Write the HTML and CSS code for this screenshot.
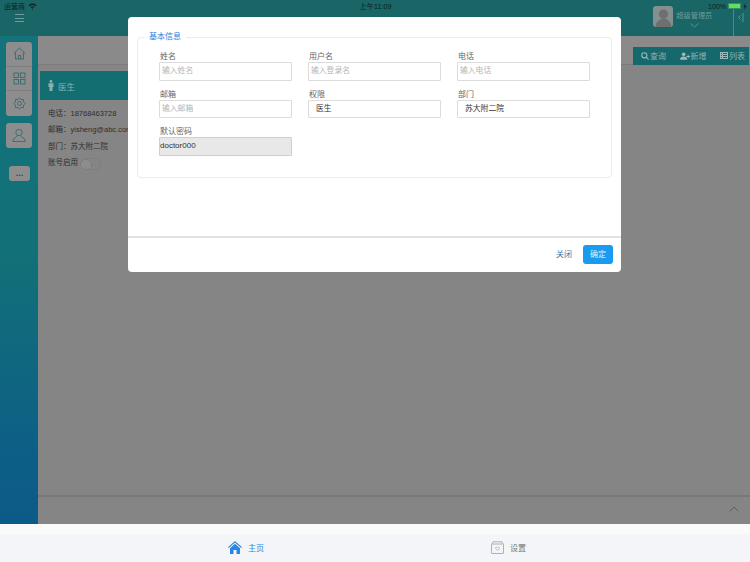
FILE: index.html
```html
<!DOCTYPE html>
<html lang="zh">
<head>
<meta charset="utf-8">
<title>医生</title>
<link rel="stylesheet" href="styles.css">
</head>
<body>
<div class="app">
  <div class="status">
    <div class="status-left"><span>运营商</span>
      <svg width="9" height="7" viewBox="0 0 9 7"><path d="M0.5 2.3C3 0 6 0 8.5 2.3L7.5 3.3C5.5 1.6 3.5 1.6 1.5 3.3ZM2.4 4.1C3.6 3 5.4 3 6.6 4.1L5.6 5C5 4.4 4 4.4 3.4 5ZM4.5 7L3.9 5.8C4.2 5.5 4.8 5.5 5.1 5.8Z" fill="#122"/></svg>
    </div>
    <div class="status-mid">上午11:09</div>
    <div class="status-right"><span>100%</span><i class="batt"><b></b></i><svg width="4" height="7" viewBox="0 0 4 7"><path d="M2.4 0L0.4 4H1.8L1.4 7L3.6 3H2.2Z" fill="#122"/></svg></div>
  </div>
  <header class="top">
    <div class="burger"><i></i><i></i><i></i></div>
    <div class="avatar"><svg width="21" height="21" viewBox="0 0 21 21"><circle cx="10.5" cy="8" r="4.6" fill="#6f6f6f"/><path d="M2.5 21C3 15 7 14 8.5 12.5H12.5C14 14 18 15 18.5 21Z" fill="#6f6f6f"/></svg></div>
    <div class="user-name">超级管理员
      <svg class="user-chev" width="9" height="5" viewBox="0 0 9 5"><path d="M0.5 0.5L4.5 4L8.5 0.5" fill="none" stroke="#6f9c9c" stroke-width="0.8"/></svg>
    </div>
    <div class="collapse"><svg width="6" height="9" viewBox="0 0 6 9" fill="none" stroke="#7fa9a9" stroke-width="0.7"><path d="M2.5 2.5L0.5 4.5L2.5 6.5M5 0V9"/></svg></div>
  </header>
  <div class="body">
    <aside class="side">
      <div class="side-group">
        <div class="side-btn"><svg width="13" height="13" viewBox="0 0 13 13" fill="none" stroke="#2c666a" stroke-width="0.8"><path d="M0.8 6.5L6.5 1L12.2 6.5M2.5 5.5V12H10.5V5.5M5.3 12V8.5H7.7V12"/></svg></div>
        <div class="side-btn"><svg width="13" height="13" viewBox="0 0 13 13" fill="none" stroke="#2c666a" stroke-width="0.8"><rect x="1" y="1" width="4.5" height="4.5"/><rect x="7.5" y="1" width="4.5" height="4.5"/><rect x="1" y="7.5" width="4.5" height="4.5"/><rect x="7.5" y="7.5" width="4.5" height="4.5"/></svg></div>
        <div class="side-btn"><svg width="13" height="13" viewBox="0 0 13 13" fill="none" stroke="#2c666a" stroke-width="0.8"><path d="M6.5 0.8L8 2.5L10.5 2.5L10.5 4.8L12.2 6.5L10.5 8.2L10.5 10.5L8 10.5L6.5 12.2L5 10.5L2.5 10.5L2.5 8.2L0.8 6.5L2.5 4.8L2.5 2.5L5 2.5Z"/><circle cx="6.5" cy="6.5" r="2"/></svg></div>
      </div>
      <div class="side-group side-user">
        <div class="side-btn"><svg width="14" height="15" viewBox="0 0 14 15" fill="none" stroke="#2c666a" stroke-width="0.8"><circle cx="7" cy="4.5" r="3.2"/><path d="M5.2 7.5C5.2 9.5 1 10 1 12V13.5H13V12C13 10 8.8 9.5 8.8 7.5"/></svg></div>
      </div>
      <div class="side-more">...</div>
    </aside>
    <main class="content">
      <div class="band">
        <div class="tools">
          <span class="tool"><svg width="8" height="8" viewBox="0 0 8 8" fill="none" stroke="#9fb9bb" stroke-width="1.1"><circle cx="3.3" cy="3.3" r="2.6"/><path d="M5.2 5.2L7.6 7.6"/></svg>查询</span>
          <span class="tool"><svg width="10" height="8" viewBox="0 0 11 8" fill="#9fb9bb"><circle cx="4" cy="2.2" r="2"/><path d="M0 8C0 5.5 2 4.6 4 4.6S8 5.5 8 8ZM8.5 2.5H9.5V4H11V5H9.5V6.5H8.5V5H7V4H8.5Z"/></svg>新增</span>
          <span class="tool"><svg width="8" height="7" viewBox="0 0 8 7" fill="#9fb9bb"><path d="M0 0H8V7H0ZM1 1V2H2V1ZM3 1V2H7V1ZM1 3V4H2V3ZM3 3V4H7V3ZM1 5V6H2V5ZM3 5V6H7V5Z"/></svg>列表</span>
        </div>
      </div>
      <div class="card">
        <div class="card-head"><svg width="6" height="11" viewBox="0 0 6 11" fill="#8fb0b2"><circle cx="3" cy="1.4" r="1.4"/><path d="M0.5 3.2H5.5V7H4.5V11H1.5V7H0.5Z"/></svg><span>医生</span></div>
        <div class="info">
          <p>电话：18768463728</p>
          <p>邮箱：yisheng@abc.com</p>
          <p>部门：苏大附二院</p>
          <p class="acct">账号启用<i class="toggle"></i></p>
        </div>
      </div>
      <div class="spacer"></div>
      <div class="foot-bar"><svg width="10" height="6" viewBox="0 0 10 6"><path d="M0.5 5.5L5 1L9.5 5.5" fill="none" stroke="#5f5f5f" stroke-width="1"/></svg></div>
    </main>
  </div>
  <nav class="tabs">
    <div class="tab tab-home">
      <svg width="14" height="13" viewBox="0 0 14 13"><path d="M7 0L14 6.3L13.2 7.1L7 1.5L0.8 7.1L0 6.3Z" fill="#2a86e0"/><path d="M7 2.8L12 7.3V13H8.5V9H5.5V13H2V7.3Z" fill="#2a86e0"/></svg>
      <span>主页</span>
    </div>
    <div class="tab tab-set">
      <svg width="13" height="13" viewBox="0 0 13 13" fill="none" stroke="#a9a9a9" stroke-width="0.9"><path d="M1 3L2 0.8H11L12 3"/><rect x="0.5" y="3" width="12" height="9.5" rx="0.5"/><path d="M6.5 9.5L4.7 7.7C4 6.5 5.7 5.500 6.5 6.8C7.3 5.5 9 6.5 8.3 7.7Z" stroke-width="0.7"/></svg>
      <span>设置</span>
    </div>
  </nav>
  <section class="modal">
    <div class="fieldset">
      <div class="legend">基本信息</div>
      <div class="grid">
        <label class="field">姓名<span class="input ph">输入姓名</span></label>
        <label class="field">用户名<span class="input ph">输入登录名</span></label>
        <label class="field">电话<span class="input ph">输入电话</span></label>
        <label class="field">邮箱<span class="input ph">输入邮箱</span></label>
        <label class="field">权限<span class="input sel">医生</span></label>
        <label class="field">部门<span class="input sel">苏大附二院</span></label>
        <label class="field">默认密码<span class="input off">doctor000</span></label>
      </div>
    </div>
    <div class="modal-foot">
      <span class="close">关闭</span>
      <span class="ok">确定</span>
    </div>
  </section>
</div>
</body>
</html>
```
FILE: styles.css
```css
* { box-sizing: border-box; }
html, body { margin: 0; padding: 0; }
body {
  width: 750px; height: 562px; overflow: hidden;
  font-family: "Liberation Sans", "Noto Sans CJK SC", sans-serif;
  font-size: 8px; color: #444; background: #878787;
}
.app { position: relative; width: 750px; height: 562px; display: flex; flex-direction: column; }

.status {
  position: absolute; z-index: 2; left: 0; top: 0; width: 750px; height: 12px; padding: 0 3px 0 4px;
  display: flex; align-items: center; justify-content: space-between;
  font-size: 7px; color: #0d2222;
}
.status-left, .status-right { display: flex; align-items: center; gap: 3px; width: 120px; }
.status-right { justify-content: flex-end; gap: 2px; }
.status-mid { font-size: 7.2px; }
.batt { display: block; width: 13px; height: 6px; background: #1b6566; border: 0.5px solid #3c8a6a; }
.batt b { display: block; width: 100%; height: 100%; background: #5ee05a; }

.top {
  height: 36px; flex: none; background: #1a6566;
  display: flex; align-items: flex-start;
}
.burger { margin: 14px 0 0 15px; width: 9px; display: flex; flex-direction: column; gap: 2.5px; }
.burger i { display: block; height: 1px; background: #6f9c9c; }
.avatar {
  margin: 6px 0 0 629px; width: 21px; height: 21px; border-radius: 3px;
  background: #858f8f; overflow: hidden;
}
.user-name {
  margin: 11px 0 0 3px; width: 36px; font-size: 7.2px; color: #6f9c9c; line-height: 9px;
  white-space: nowrap; text-align: center;
}
.user-chev { display: block; margin: 3px auto 0; }
.collapse {
  margin: 6px 0 0 21px; height: 30px; width: 17px; border-left: 1px solid #4f8a8a;
  padding: 7px 0 0 4px;
}
.collapse svg { display: block; }

.body { flex: 1; min-height: 0; display: flex; }
.side {
  width: 38px; flex: none; padding: 6px 6px 0;
  background: linear-gradient(180deg, #14727a 0%, #127078 45%, #0d5f86 85%, #0c5a88 100%);
  display: flex; flex-direction: column;
}
.side-group { background: #8d8d8d; border-radius: 3px; width: 26px; }
.side-btn {
  height: 24.7px; display: flex; align-items: center; justify-content: center;
  border-bottom: 1px solid #7f7f7f;
}
.side-btn:last-child { border-bottom: 0; }
.side-user { margin-top: 7px; }
.side-more {
  margin: 18px 0 0 3px; width: 21px; height: 15px; border-radius: 3px; background: #8d8d8d;
  color: #1c4f77; font-size: 9px; font-weight: bold; text-align: center; line-height: 14px;
}

.content { flex: 1; min-width: 0; background: #858585; display: flex; flex-direction: column; }
.band {
  height: 29px; flex: none; background: #8a8a8a; border-bottom: 1px solid #7c7c7c;
  display: flex; justify-content: flex-end; align-items: flex-end; padding-right: 1px;
}
.tools {
  width: 116px; height: 18.5px; background: #15686c; margin-bottom: -1px;
  display: flex; align-items: center; padding-left: 8px; gap: 13.5px;
}
.tool { display: flex; align-items: center; gap: 1px; color: #93b0b2; font-size: 8px; white-space: nowrap; }
.card { width: 90px; margin: 6px 0 0 2px; }
.card-head {
  height: 29px; background: #136e72; display: flex; align-items: center;
  padding-left: 8px; gap: 4px; color: #8fb0b2; font-size: 8.5px;
}
.info { padding: 8px 0 0 8px; white-space: nowrap; color: #2e2e2e; font-size: 7.5px; }
.info p { margin: 0; height: 16.3px; line-height: 12px; }
.info .acct { display: flex; align-items: flex-start; font-size: 7.5px; line-height: 10px; margin-top: 1px; }
.toggle {
  display: block; width: 21px; height: 12px; border-radius: 6px; margin: 0 0 0 2px;
  background: radial-gradient(circle at 6px 6px, #8c8c8c 5px, #7a7a7a 5.5px, #7f7f7f 6px, #858585 6px);
  border: 0.5px solid #7f7f7f; border-left: 0;
}
.spacer { flex: 1; }
.foot-bar {
  height: 29px; flex: none; border-top: 2px solid #787878;
  display: flex; justify-content: flex-end; align-items: flex-start; padding: 9px 11px 0 0;
}

.tabs {
  height: 38px; flex: none; display: flex;
  background: linear-gradient(180deg, #fafafa 0, #fafafa 10px, #f4f5f8 10px);
  padding-top: 16px;
}
.tab { display: flex; align-items: center; gap: 6px; height: 14px; font-size: 8px; }
.tab-home { margin-left: 228px; color: #2a86e0; }
.tab-set { margin-left: 227px; color: #777; }

.modal {
  position: absolute; left: 128px; top: 17px; width: 493px; height: 255px;
  background: #fff; border-radius: 4px; padding: 20px 9px 0;
  display: flex; flex-direction: column;
}
.fieldset {
  position: relative; height: 141px; flex: none; border: 1px solid #ececec; border-radius: 4px;
  padding: 14px 21px 0 22px;
}
.legend {
  position: absolute; left: 6px; top: -7px; padding: 0 5px; background: #fff;
  color: #2a7de1; font-size: 8px; line-height: 11px;
}
.grid { display: grid; grid-template-columns: 133px 133px 133px; column-gap: 16px; row-gap: 5px; }
.field { display: block; color: #666; font-size: 8px; line-height: 10px; height: 32.6px; }
.input {
  display: flex; align-items: center; height: 18.5px; margin: 0 1px 0 -1px; padding: 0 2px;
  border: 1px solid #dcdcdc; border-radius: 1px; font-size: 7.8px; white-space: nowrap;
  background: #fff;
}
.ph { color: #b5b5b5; }
.sel { color: #333; padding-left: 7px; }
.off { background: #e8e8e8; color: #333; border-color: #cfcfcf; font-size: 8px; padding-left: 0; }
.modal-foot {
  margin: 58px -9px 0; flex: 1; border-top: 2px solid #e2e2e2;
  display: flex; align-items: flex-start; justify-content: flex-end; gap: 11px; padding: 7px 8px 0 0;
}
.close { color: #3f74a8; font-size: 8px; line-height: 19px; }
.ok {
  width: 30px; height: 19px; border-radius: 3px; background: #1b9bf0; color: #dff1fd;
  font-size: 8px; line-height: 19px; text-align: center;
}
```
